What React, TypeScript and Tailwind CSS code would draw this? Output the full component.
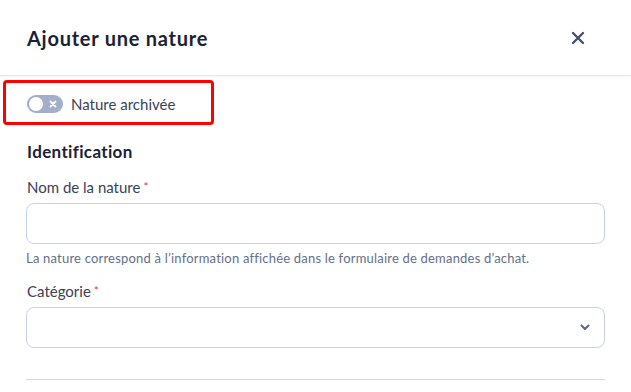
import React from "react";

export default function App() {
  return (
    <div className="relative w-[631px] h-[392px] overflow-hidden bg-white" style={{ fontFamily: "Lato, 'Noto Sans', sans-serif" }}>
      <div className="flex items-center justify-between h-[76px] pl-[27px] pr-[46px] border-b border-[#e3e8f2] shadow-[0_1px_2px_rgba(30,41,80,0.05)]">
        <h1 className="text-[20px] font-bold tracking-[0.75px] text-[#1b2234] leading-none">Ajouter une nature</h1>
        <svg width="14" height="14" viewBox="0 0 14 14" className="text-[#44526f]">
          <path d="M2 2 L12 12 M12 2 L2 12" stroke="currentColor" strokeWidth="2.4" strokeLinecap="round" />
        </svg>
      </div>
      <div className="px-[26px]">
        <div className="flex items-center gap-[8px] h-[56px] pl-[1px]">
          <div className="relative w-[36px] h-[18px] rounded-full bg-[#a3aecb] flex items-center">
            <div className="absolute left-[2px] top-[2px] w-[14px] h-[14px] rounded-full bg-white" />
            <svg width="8" height="8" viewBox="0 0 8 8" className="absolute right-[6px] top-[5px]">
              <path d="M1.5 1.5 L6.5 6.5 M6.5 1.5 L1.5 6.5" stroke="white" strokeWidth="1.8" strokeLinecap="round" />
            </svg>
          </div>
          <span className="text-[15px] text-[#3a4256]">Nature archivée</span>
        </div>
        <h2 className="mt-[10px] pl-[1px] text-[17px] font-bold tracking-[0.35px] text-[#1b2234] leading-[20px]">Identification</h2>
        <label className="block mt-[15px] pl-[1px] text-[15px] text-[#3a4256] leading-[20px]">
          Nom de la nature<span className="text-[#e53e3e] text-[12px] align-top ml-[3px]">*</span>
        </label>
        <div className="mt-[6px] h-[41px] rounded-[8px] border border-[#c6d0e8] bg-white" />
        <p className="mt-[5px] text-[13px] tracking-[0.2px] text-[#64708a] leading-[18px]">
          La nature correspond à l’information affichée dans le formulaire de demandes d’achat.
        </p>
        <label className="block mt-[14px] pl-[1px] text-[15px] text-[#3a4256] leading-[20px]">
          Catégorie<span className="text-[#e53e3e] text-[12px] align-top ml-[3px]">*</span>
        </label>
        <div className="mt-[6px] h-[41px] rounded-[8px] border border-[#c6d0e8] bg-white flex items-center justify-end pr-[14px]">
          <svg width="10" height="7" viewBox="0 0 10 7">
            <path d="M1.5 1.5 L5 5 L8.5 1.5" fill="none" stroke="#5b6786" strokeWidth="2" strokeLinecap="round" strokeLinejoin="round" />
          </svg>
        </div>
        <div className="mt-[31px] border-t border-[#cdd6ec]" />
      </div>
      <div className="absolute left-[3px] top-[80px] w-[211px] h-[45px] rounded-[4px] border-[3px] border-[#ff0000] pointer-events-none" />
    </div>
  );
}
